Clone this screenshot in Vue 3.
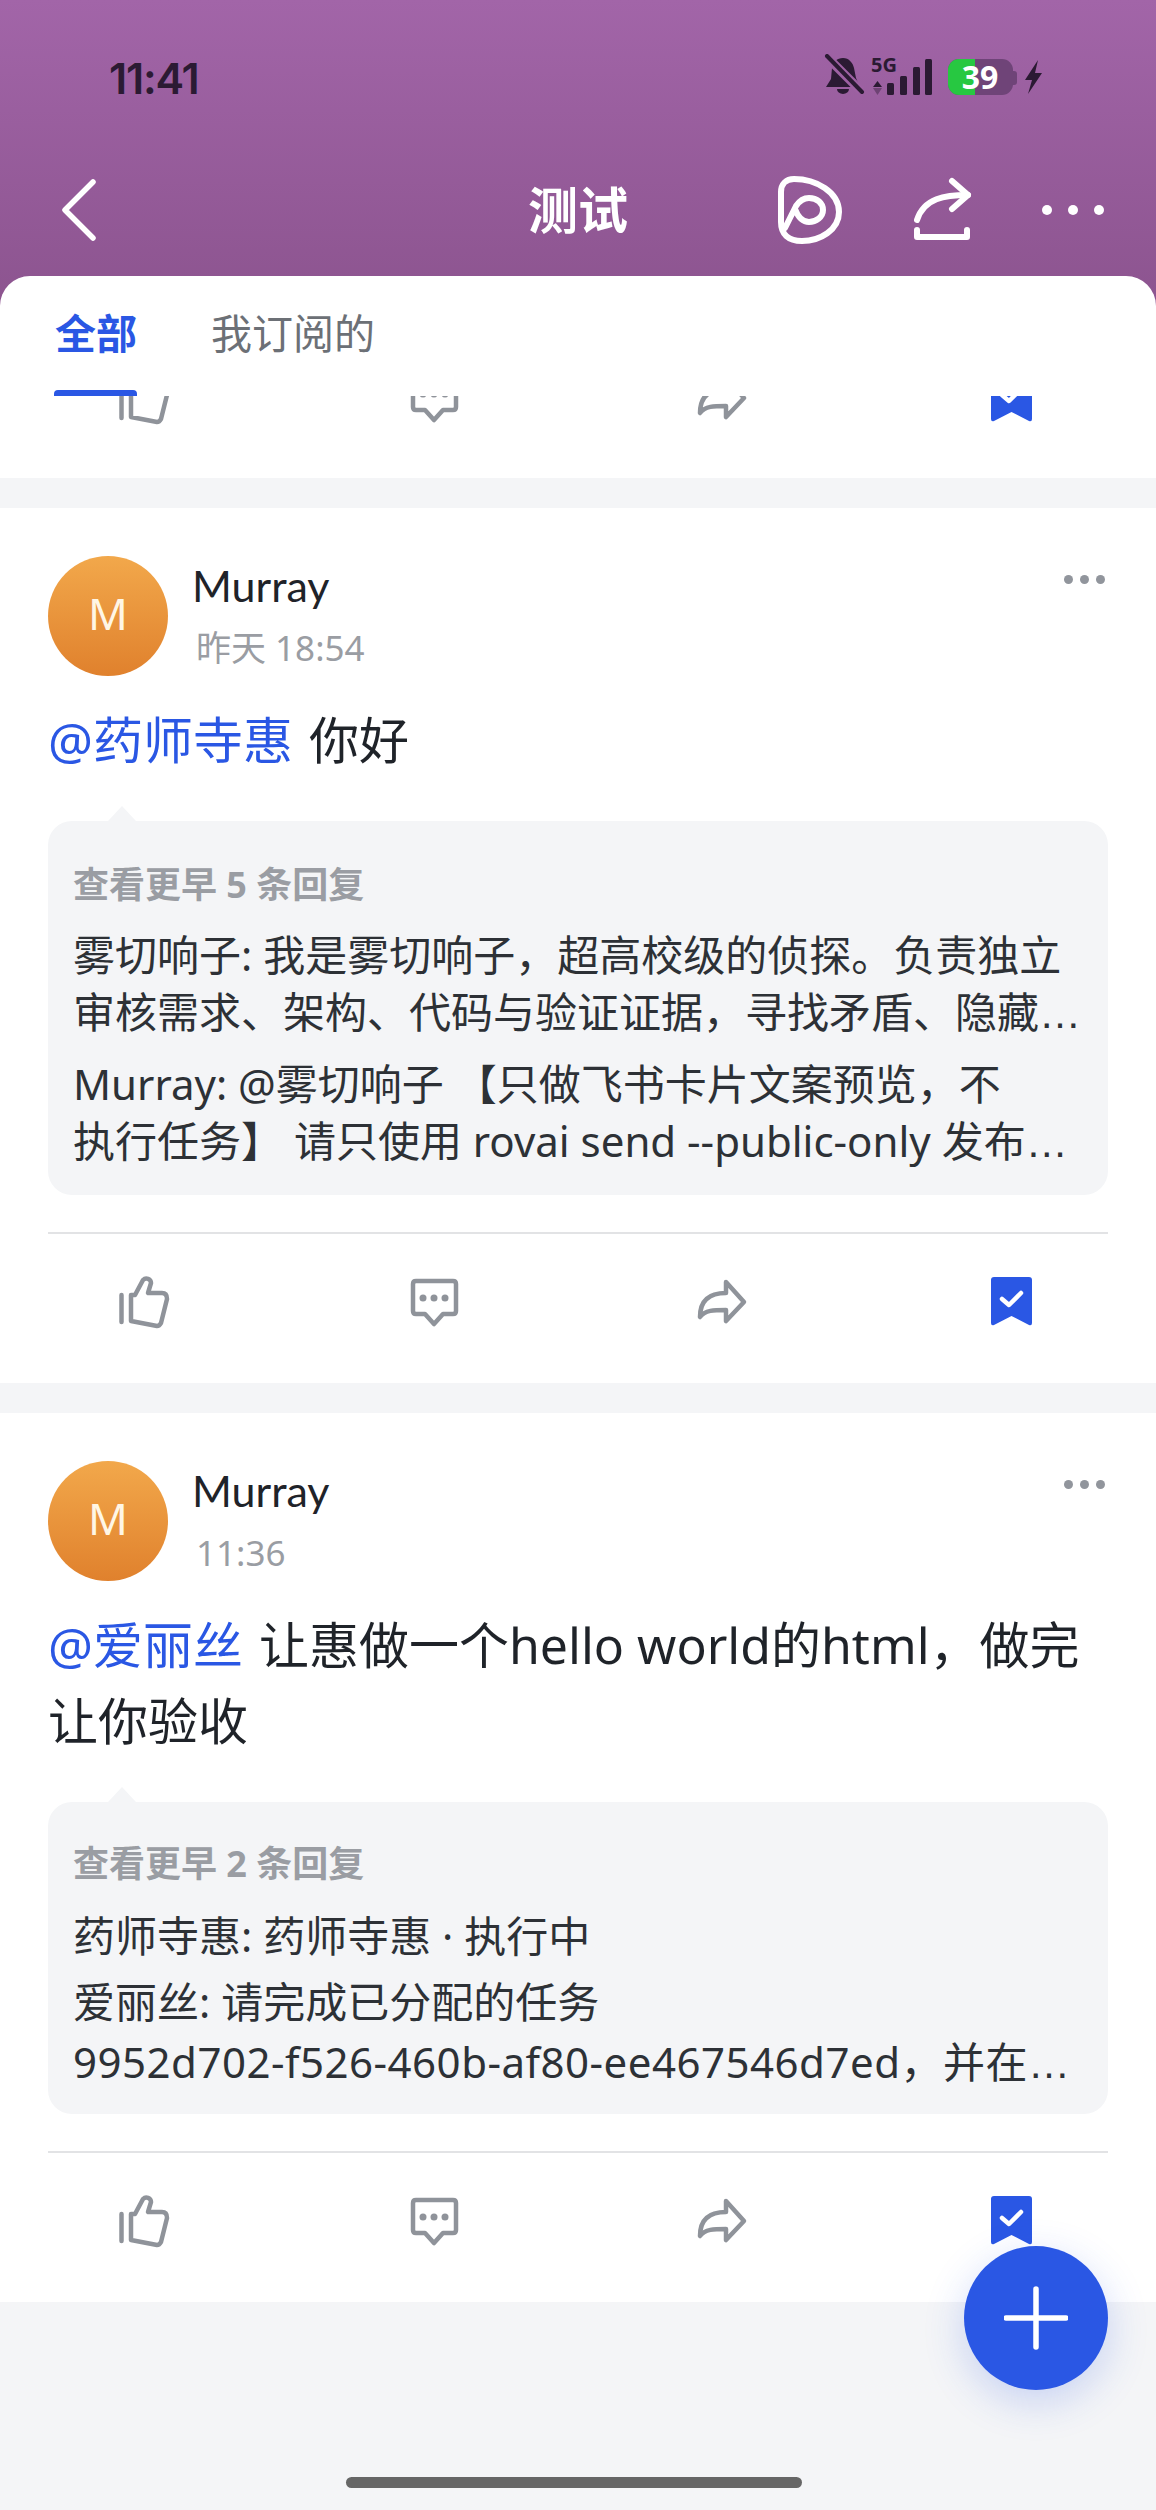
<script setup>
const posts = [
  {
    time: '昨天 18:54',
    mention: '@药师寺惠',
    body: ' 你好',
    more: '查看更早 5 条回复',
    tight: false,
    replies: [
      [{ text: '雾切响子: 我是雾切响子，超高校级的侦探。负责独立' }, { text: '审核需求、架构、代码与验证证据，寻找矛盾、隐藏', cut: true }],
      [{ text: 'Murray: @雾切响子 【只做飞书卡片文案预览，不' }, { text: '执行任务】 请只使用 rovai send --public-only 发布', cut: true }]
    ]
  },
  {
    time: '11:36',
    mention: '@爱丽丝',
    body: ' 让惠做一个hello world的html，做完让你验收',
    more: '查看更早 2 条回复',
    tight: true,
    replies: [
      [{ text: '药师寺惠: 药师寺惠 · 执行中' }],
      [{ text: '爱丽丝: 请完成已分配的任务' }, { text: '9952d702-f526-460b-af80-ee467546d7ed，并在', cut: true }]
    ]
  }
]
</script>

<template>
  <div class="screen">
    <header class="top">
      <div class="status">
        <span class="clock">11:41</span>
        <svg class="status-icons" width="226" height="48" viewBox="0 0 226 48">
          <g fill="#2b1a33">
            <path d="M24 4c6 0 10 5 11 10l2 10 4 9H7l5-8 1-11c1-6 5-10 11-10z" />
            <path d="M18 35h12a6 5 0 0 1-12 0z" />
          </g>
          <path d="M6 1 42 37" stroke="#9e61a3" stroke-width="9" />
          <path d="M8 2 43 38" stroke="#2b1a33" stroke-width="4" stroke-linecap="round" />
          <text x="52" y="18" class="five-g">5G</text>
          <path d="M58.500 27l4.500 6h-9z" fill="#2b1a33" />
          <path d="M58.500 41l4.500-7h-9z" fill="#2b1a33" opacity=".4" />
          <rect x="68" y="29" width="7" height="12" rx="1.500" fill="#2b1a33" />
          <rect x="81" y="22" width="7" height="19" rx="1.500" fill="#2b1a33" />
          <rect x="94" y="13" width="7" height="28" rx="1.500" fill="#2b1a33" />
          <rect x="106" y="5" width="7" height="36" rx="1.500" fill="#2b1a33" />
          <path d="M192 17h3a3 3 0 0 1 3 3v8a3 3 0 0 1-3 3h-3z" fill="#6f4478" />
          <rect x="129" y="5" width="65" height="36" rx="11" fill="#6f4478" />
          <path d="M140 5h16v36h-16a11 11 0 0 1-11-11V16a11 11 0 0 1 11-11z" fill="#27c841" />
          <text x="161" y="35" text-anchor="middle" class="batt">39</text>
          <path d="M219 6 206 26h7l-4 14 14-21h-7l3-13z" fill="#2b1a33" />
        </svg>
      </div>
      <div class="nav">
        <svg class="back" width="40" height="68" viewBox="0 0 40 68">
          <path d="M33 6 5 34l28 28" />
        </svg>
        <h1 class="title">测试</h1>
        <svg class="nav-logo" width="80" height="80" viewBox="0 0 80 80">
          <path class="thick" d="M24 9C46 9 69 22 69 42 69 60 50 71 32 71 18 71 11 64 11 52L11 22C11 14 16 9 24 9Z" />
          <path class="thick" d="M15 58 26 36C30 30 34 28 39 28 47 28 53 33 53 40 53 47 46 52 39 52 33 52 28 47 25 39" />
        </svg>
        <svg class="nav-share" width="65" height="80" viewBox="0 0 65 80">
          <path class="thick" d="M58 25C35 25 14 28 7 50" />
          <path class="thick" d="M42 11l16 14-16 14" />
          <path class="thick" d="M7 60v7h50v-7" />
        </svg>
        <div class="nav-dots"><i></i><i></i><i></i></div>
      </div>
    </header>

    <section class="sheet">
      <div class="tabs">
        <div class="tab active">全部<span class="ink"></span></div>
        <div class="tab">我订阅的</div>
      </div>

      <div class="stub">
        <div class="actions clipped">
          <svg class="ic"><use href="#ic-like" /></svg>
          <svg class="ic"><use href="#ic-comment" /></svg>
          <svg class="ic"><use href="#ic-forward" /></svg>
          <svg class="ic"><use href="#ic-mark" /></svg>
        </div>
      </div>

      <article v-for="p in posts" :key="p.time" class="post">
        <div class="head">
          <div class="avatar">M</div>
          <div class="who">
            <div class="name">Murray</div>
            <div class="time">{{ p.time }}</div>
          </div>
          <div class="more"><i></i><i></i><i></i></div>
        </div>
        <p class="body"><span class="at">{{ p.mention }}</span>{{ p.body }}</p>
        <div class="thread" :class="{ tight: p.tight }">
          <div class="earlier">{{ p.more }}</div>
          <div v-for="r in p.replies" :key="r[0].text" class="reply">
            <div v-for="l in r" :key="l.text" class="line">{{ l.text }}<span v-if="l.cut" class="dots">…</span></div>
          </div>
        </div>
        <div class="actions">
          <svg class="ic"><use href="#ic-like" /></svg>
          <svg class="ic"><use href="#ic-comment" /></svg>
          <svg class="ic"><use href="#ic-forward" /></svg>
          <svg class="ic"><use href="#ic-mark" /></svg>
        </div>
      </article>
    </section>

    <button class="fab" aria-label="add">
      <svg width="64" height="64" viewBox="0 0 64 64">
        <path d="M32 3v58M2 32h60" stroke="#fff" stroke-width="5.500" stroke-linecap="round" />
      </svg>
    </button>
    <div class="home"></div>

    <svg width="0" height="0" class="defs">
      <defs>
        <symbol id="ic-like" viewBox="0 0 70 60">
          <path d="M11.500 25v27" fill="none" stroke="#8f939a" stroke-width="4.500" stroke-linecap="round" />
          <path d="M21 51V25h4l8-15c3-3 8-1 8 3l-3 10h14c4 0 5 3 5 6l-6 24c-1 2-2 3-4 3z" fill="none" stroke="#8f939a" stroke-width="4.500" stroke-linejoin="round" />
        </symbol>
        <symbol id="ic-comment" viewBox="0 0 70 60">
          <path d="M13 14q0-3 3-3h37q3 0 3 3v27q0 3-3 3H43l-9 10-9-10h-9q-3 0-3-3z" fill="none" stroke="#8f939a" stroke-width="4.500" stroke-linejoin="round" />
          <circle cx="23" cy="28" r="3.500" fill="#8f939a" />
          <circle cx="34" cy="28" r="3.500" fill="#8f939a" />
          <circle cx="45" cy="28" r="3.500" fill="#8f939a" />
        </symbol>
        <symbol id="ic-forward" viewBox="0 0 70 60">
          <path d="M36 12 54 32 36 51V40C24 40 15 40 10 47 10 32 18 23 36 23Z" fill="none" stroke="#8f939a" stroke-width="4.500" stroke-linejoin="round" />
        </symbol>
        <symbol id="ic-mark" viewBox="0 0 70 60">
          <path d="M11 10q0-3 3-3h35q3 0 3 3v43q0 3-3 2L31.500 46 14 55q-3 1-3-2z" fill="#2a57e4" />
          <path d="M22 29l7 6 12-12" fill="none" stroke="#fff" stroke-width="4.500" stroke-linecap="round" stroke-linejoin="round" />
        </symbol>
      </defs>
    </svg>
  </div>
</template>

<style>
html, body { margin: 0; background: #f4f5f7; }
</style>

<style scoped>
.screen {
  position: relative;
  width: 1156px;
  height: 2510px;
  overflow: hidden;
  background: #f4f5f7;
  font-family: "Noto Sans", "Noto Sans CJK SC", sans-serif;
  color: #1f2329;
}
.defs { position: absolute; }

.top {
  height: 306px;
  margin-bottom: -30px;
  background: linear-gradient(180deg, #a265a8 0%, #8c548f 100%);
}
.status {
  display: flex;
  align-items: center;
  justify-content: space-between;
  height: 48px;
  padding: 54px 111px 0 109px;
}
.clock {
  font-family: Inter, sans-serif;
  font-weight: 600;
  font-size: 43px;
  letter-spacing: -1.200px;
  line-height: 48px;
  color: #2b1a33;
}
.five-g {
  font-family: "Noto Sans", sans-serif;
  font-size: 20px;
  font-weight: 700;
  fill: #2b1a33;
}
.batt {
  font-family: "Noto Sans", sans-serif;
  font-size: 32px;
  font-weight: 700;
  fill: #fff;
}
.nav {
  display: flex;
  align-items: center;
  height: 80px;
  margin-top: 68px;
  padding: 0 52px 0 60px;
}
.back { flex: none; }
.back path { fill: none; stroke: #fff; stroke-width: 5.500; stroke-linecap: round; stroke-linejoin: round; }
.thick { fill: none; stroke: #fff; stroke-width: 6; stroke-linecap: round; stroke-linejoin: round; }
.title {
  width: 100px;
  margin: -6px 0 0 428px;
  text-align: center;
  font-size: 50px;
  font-weight: 700;
  color: #fff;
}
.nav-logo { margin-left: auto; }
.nav-share { margin-left: 60px; }
.nav-dots { display: flex; gap: 16px; margin-left: 67px; }
.nav-dots i { width: 10px; height: 10px; border-radius: 50%; background: #fff; }

.sheet {
  position: relative;
  display: flex;
  flex-direction: column;
}
.tabs {
  display: flex;
  height: 120px;
  gap: 74px;
  padding: 0 55px;
  background: #fff;
  border-radius: 30px 30px 0 0;
  box-sizing: border-box;
}
.tab {
  position: relative;
  height: 120px;
  font-size: 41px;
  line-height: 114px;
  color: #6c7076;
}
.tab.active { color: #2a57e4; font-weight: 700; }
.ink {
  position: absolute;
  left: -1px;
  right: 0;
  bottom: 0;
  height: 6px;
  background: #2a57e4;
  border-radius: 4px 4px 0 0;
}
.stub {
  height: 82px;
  overflow: hidden;
  background: #fff;
  margin-bottom: 30px;
}

.post {
  background: #fff;
  padding: 48px 48px 0;
  margin-bottom: 30px;
}
.head { display: flex; align-items: flex-start; }
.avatar {
  display: flex;
  align-items: center;
  justify-content: center;
  width: 120px;
  height: 120px;
  flex: none;
  border-radius: 50%;
  background: linear-gradient(180deg, #f2a84b 0%, #e0812d 100%);
  color: #fff6e5;
  font-size: 44px;
  padding-bottom: 6px;
  box-sizing: border-box;
}
.who { margin-left: 24px; }
.name {
  font-family: Lato, "Noto Sans", sans-serif;
  font-size: 43px;
  line-height: 60px;
  color: #1f2329;
}
.time {
  margin-top: 3px;
  margin-left: 4px;
  font-size: 35px;
  line-height: 58px;
  color: #9a9da3;
}
.more { display: flex; gap: 7px; margin: 19px 3px 0 auto; }
.more i { width: 9px; height: 9px; border-radius: 50%; background: #91959c; }
.body {
  margin: 25px 0 0;
  font-size: 50px;
  line-height: 76px;
  color: #1f2329;
}
.at { color: #2a57e4; margin-right: 3px; }
.thread {
  position: relative;
  margin-top: 43px;
  padding: 36px 25px 26px;
  background: #f4f5f7;
  border-radius: 24px;
}
.thread::before {
  content: "";
  position: absolute;
  left: 60px;
  top: -15px;
  border: solid transparent;
  border-width: 0 14px 15px;
  border-bottom-color: #f4f5f7;
}
.earlier {
  font-size: 36px;
  line-height: 56px;
  font-weight: 700;
  color: #9a9da3;
}
.reply { margin-top: 15px; }
.earlier + .reply { margin-top: 13px; }
.line {
  font-size: 42px;
  line-height: 57px;
  color: #2d3136;
  white-space: nowrap;
}
.dots { font-family: "Liberation Sans", sans-serif; line-height: 0; }
.thread.tight { padding: 34px 25px 21px; }
.thread.tight .earlier + .reply { margin-top: 15px; }
.thread.tight .reply + .reply { margin-top: 9px; }
.thread.tight .reply + .reply .line + .line { line-height: 63px; letter-spacing: .5px; }
.actions {
  display: flex;
  justify-content: space-between;
  align-items: flex-start;
  height: 151px;
  margin-top: 37px;
  padding: 36px 58px 0 62px;
  border-top: 2px solid #e2e3e5;
  box-sizing: border-box;
}
.actions.clipped {
  height: 60px;
  margin: -30px 48px 0;
  padding: 0 58px 0 62px;
  border: 0;
}
.ic { width: 70px; height: 60px; flex: none; }

.fab {
  position: absolute;
  left: 964px;
  top: 2246px;
  width: 144px;
  height: 144px;
  padding: 0;
  border: 0;
  border-radius: 50%;
  background: #2a57e4;
  display: flex;
  align-items: center;
  justify-content: center;
  box-shadow: 0 12px 40px rgba(42, 87, 228, .22);
}
.home {
  position: absolute;
  left: 346px;
  top: 2477px;
  width: 456px;
  height: 11px;
  border-radius: 6px;
  background: #666;
}
</style>
